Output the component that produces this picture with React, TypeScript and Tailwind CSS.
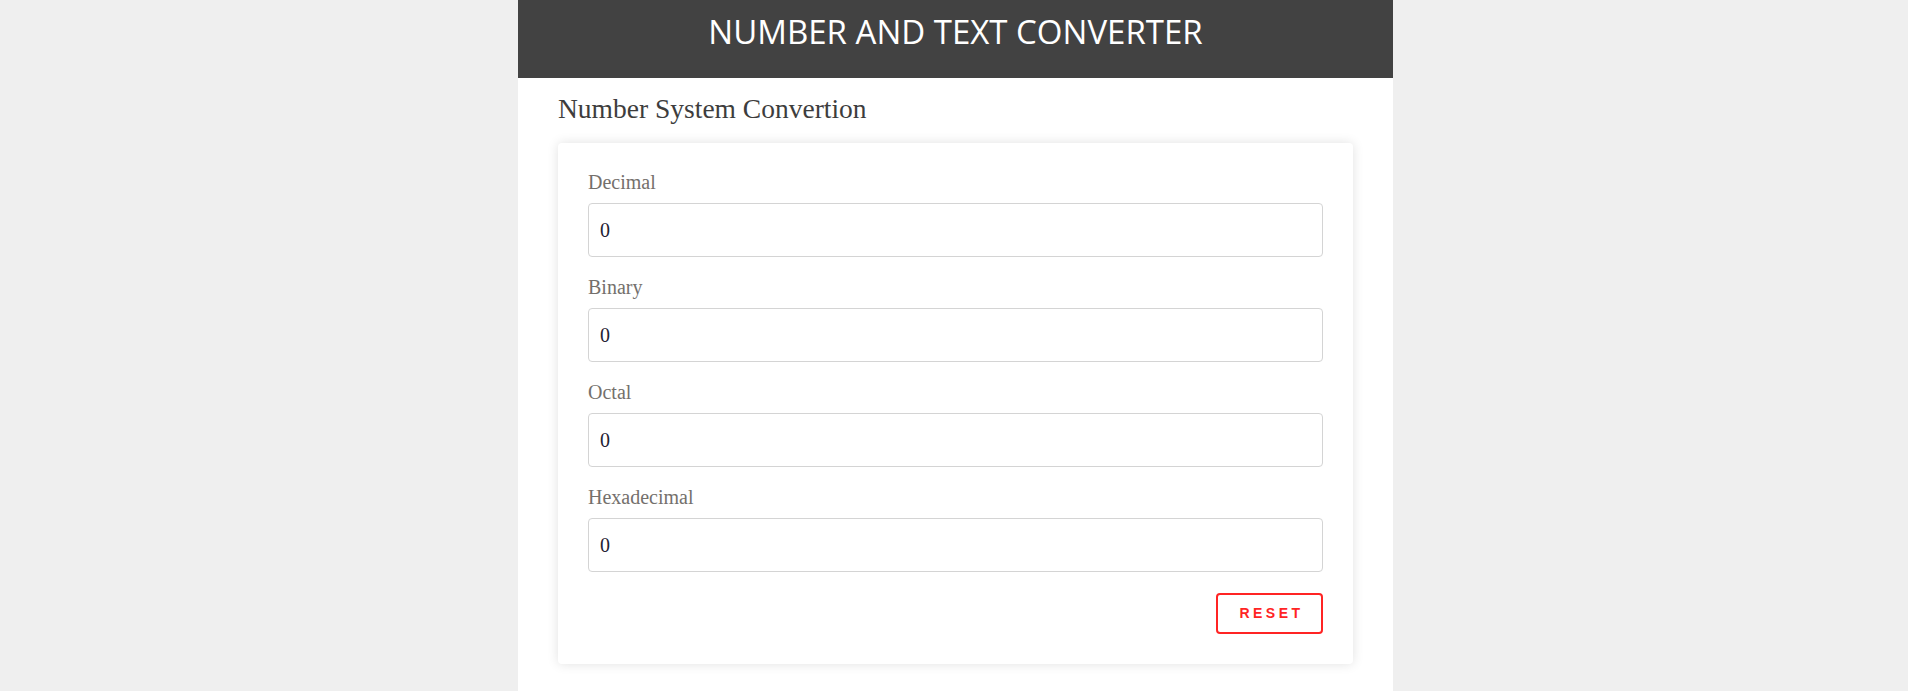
import React, { useState } from 'react';

const fields = [
  { key: 'decimal', label: 'Decimal' },
  { key: 'binary', label: 'Binary' },
  { key: 'octal', label: 'Octal' },
  { key: 'hex', label: 'Hexadecimal' },
];

export default function App() {
  const [values, setValues] = useState<Record<string, string>>({
    decimal: '0',
    binary: '0',
    octal: '0',
    hex: '0',
  });

  const handleReset = () => {
    setValues({ decimal: '0', binary: '0', octal: '0', hex: '0' });
  };

  return (
    <div className="min-h-screen bg-[#efefef] pl-[3px]">
      <div className="mx-auto w-[875px] min-h-[691px] bg-white">
        {/* Header */}
        <div className="h-[78px] bg-[#424242] pt-[16px] text-center">
          <h1 className="text-[33px] leading-[32px] font-medium text-white font-['Open_Sans',sans-serif]">
            NUMBER AND TEXT CONVERTER
          </h1>
        </div>

        <div className="px-10">
          <h2 className="mt-[13px] mb-[16px] text-[27.5px] leading-[36px] text-[#3d3d3d] font-['Liberation_Serif',serif]">
            Number System Convertion
          </h2>

          {/* Converter card */}
          <div className="rounded bg-white px-[30px] pt-[25px] pb-[30px] shadow-[0_0_12px_rgba(0,0,0,0.12)]">
            <div className="flex flex-col gap-[16px]">
              {fields.map((f) => (
                <div key={f.key}>
                  <label className="mb-[7px] block text-[20px] leading-[28px] text-[#74706c] font-['Liberation_Serif',serif]">
                    {f.label}
                  </label>
                  <input
                    value={values[f.key]}
                    onChange={(e) => setValues({ ...values, [f.key]: e.target.value })}
                    className="block h-[54px] w-full rounded border border-[#d4d4d4] px-[11px] text-[20px] text-[#1f2333] outline-none font-['Liberation_Serif',serif]"
                  />
                </div>
              ))}
            </div>

            <div className="mt-[21px] flex justify-end">
              <button
                onClick={handleReset}
                className="h-[41px] w-[107px] rounded border-2 border-[#ff2424] bg-white pl-[4px] text-[14px] font-bold tracking-[3.5px] text-[#ff2424] font-['Liberation_Sans',sans-serif]"
              >
                RESET
              </button>
            </div>
          </div>
        </div>
      </div>
    </div>
  );
}
